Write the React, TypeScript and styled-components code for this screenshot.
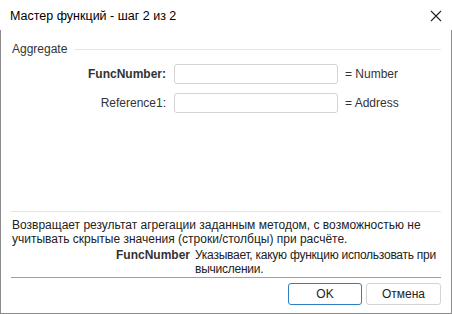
import React from 'react';
import styled, { createGlobalStyle } from 'styled-components';

const GlobalStyle = createGlobalStyle`
  html, body {
    margin: 0;
    padding: 0;
    background: #ffffff;
  }
  body {
    font-family: "Liberation Sans", Arial, sans-serif;
    font-size: 12px;
    color: #1e1e1e;
  }
`;

const Window = styled.div`
  width: 452px;
  height: 314px;
  display: flex;
  flex-direction: column;
  background: #ffffff;
  box-sizing: border-box;
`;

const TitleBar = styled.div`
  height: 30px;
  flex-shrink: 0;
  display: flex;
  align-items: center;
  justify-content: space-between;
  padding: 2px 10px 0 10px;
  box-sizing: border-box;
  font-size: 12.5px;
  color: #000;
`;

const CloseButton = styled.button`
  border: none;
  background: none;
  padding: 0;
  width: 14px;
  height: 14px;
  display: flex;
  align-items: center;
  justify-content: center;
  margin-right: -1px;
`;

const Body = styled.div`
  flex: 1;
  display: flex;
  flex-direction: column;
  border: 1px solid #8c8c8c;
  border-top: none;
  padding: 0 10px 8px 10px;
`;

const GroupHeader = styled.div`
  display: flex;
  align-items: center;
  gap: 7px;
  height: 16px;
  margin-top: 11px;
  padding-left: 1px;
  color: #333;

  &::after {
    content: '';
    flex: 1;
    height: 1px;
    background: #e6e6e6;
  }
`;

const Form = styled.div`
  display: grid;
  grid-template-columns: 155px 164px auto;
  column-gap: 8px;
  row-gap: 9px;
  align-items: center;
  margin-top: 7px;
`;

const Label = styled.label<{ $required?: boolean }>`
  text-align: right;
  font-weight: ${({ $required }) => ($required ? 700 : 400)};
  color: #333;
`;

const Field = styled.input`
  box-sizing: border-box;
  height: 20px;
  width: 164px;
  margin: 0;
  border: 1px solid #d4d4d4;
  border-radius: 3px;
  background: #fff;
  font: inherit;
  outline: none;
`;

const Hint = styled.span`
  color: #333;
  margin-left: -1px;
`;

const Spacer = styled.div`
  flex: 1;
`;

const Description = styled.div`
  border-top: 1px solid #e6e6e6;
  padding: 6px 0 0 1px;
  line-height: 14px;
  color: #222;
`;

const ArgRow = styled.div`
  display: grid;
  grid-template-columns: 179px 1fr;
  column-gap: 5px;
  margin-top: 2px;
  line-height: 14px;
`;

const ArgName = styled.span`
  text-align: right;
  font-weight: 700;
  color: #333;
`;

const ArgText = styled.span`
  letter-spacing: -0.25px;
  color: #222;
`;

const Footer = styled.div`
  border-top: 1px solid #a0a0a0;
  margin-top: 1px;
  padding-top: 5px;
  display: flex;
  justify-content: flex-end;
  gap: 4px;
`;

const Button = styled.button<{ $primary?: boolean }>`
  width: ${({ $primary }) => ($primary ? '74px' : '75px')};
  height: 22px;
  box-sizing: border-box;
  border: 1px solid ${({ $primary }) => ($primary ? '#2b7fc4' : '#d4d4d4')};
  border-radius: 3px;
  background: #fff;
  font: inherit;
  color: #222;
  padding: 0;
`;

export default function App() {
  return (
    <>
      <GlobalStyle />
      <Window>
        <TitleBar>
          <span>Мастер функций - шаг 2 из 2</span>
          <CloseButton aria-label="Закрыть">
            <svg width="12" height="12" viewBox="0 0 12 12">
              <path d="M1 1L11 11M11 1L1 11" stroke="#222" strokeWidth="1.1" />
            </svg>
          </CloseButton>
        </TitleBar>
        <Body>
          <GroupHeader>Aggregate</GroupHeader>
          <Form>
            <Label $required>FuncNumber:</Label>
            <Field />
            <Hint>= Number</Hint>
            <Label>Reference1:</Label>
            <Field />
            <Hint>= Address</Hint>
          </Form>
          <Spacer />
          <Description>
            Возвращает результат агрегации заданным методом, с возможностью не учитывать скрытые
            значения (строки/столбцы) при расчёте.
          </Description>
          <ArgRow>
            <ArgName>FuncNumber</ArgName>
            <ArgText>Указывает, какую функцию использовать при вычислении.</ArgText>
          </ArgRow>
          <Footer>
            <Button $primary>OK</Button>
            <Button>Отмена</Button>
          </Footer>
        </Body>
      </Window>
    </>
  );
}
